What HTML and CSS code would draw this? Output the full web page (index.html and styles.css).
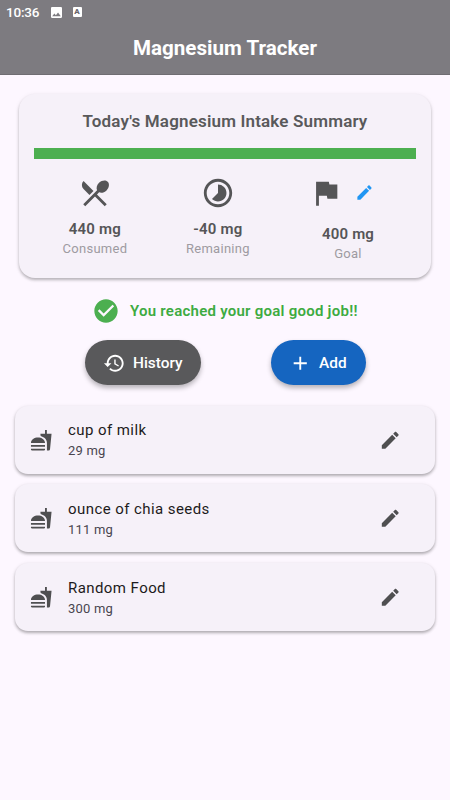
FILE: index.html
```html
<!DOCTYPE html>
<html lang="en">
<head>
<meta charset="utf-8">
<title>Magnesium Tracker</title>
<link rel="stylesheet" href="styles.css">
</head>
<body>
<svg class="defs" aria-hidden="true">
  <symbol id="edit" viewBox="0 0 24 24"><path d="M3 17.25V21h3.75L17.81 9.94l-3.75-3.75L3 17.25zM20.71 7.04c.39-.39.39-1.02 0-1.41l-2.34-2.34c-.39-.39-1.02-.39-1.41 0l-1.83 1.83 3.75 3.75 1.83-1.83z"/></symbol>
  <symbol id="food" viewBox="0 0 24 24"><path d="M18.06 22.99h1.66c.84 0 1.53-.64 1.63-1.46L23 5.05h-5V1h-1.97v4.05h-4.97l.3 2.34c1.71.47 3.31 1.32 4.27 2.26 1.44 1.42 2.43 2.89 2.43 5.29v8.05zM1 21.99V21h15.03v.99c0 .55-.45 1-1.01 1H2.01c-.56 0-1.01-.45-1.01-1zm15.03-7c0-8-15.03-8-15.03 0h15.03zM1.02 17h15v2h-15z"/></symbol>
</svg>
<header class="top">
  <div class="status">
    <span class="time">10:36</span>
    <svg class="status-image" viewBox="0 0 18 18"><path d="M18 16V2c0-1.100-.9-2-2-2H2C.9 0 0 .9 0 2v14c0 1.100.9 2 2 2h14c1.100 0 2-.9 2-2zM5.500 10.500l2.500 3.010L11.500 9l4.500 6H2l3.500-4.500z"/></svg>
    <span class="status-a">A</span>
  </div>
  <h1 class="title">Magnesium Tracker</h1>
</header>
<main>
  <section class="summary">
    <h2 class="summary-title">Today's Magnesium Intake Summary</h2>
    <div class="progress"></div>
    <div class="stats">
      <div class="stat consumed">
        <svg class="stat-icon" viewBox="0 0 24 24"><path d="M8.1 13.34l2.83-2.83L3.91 3.5c-1.56 1.56-1.56 4.09 0 5.66l4.19 4.18zm6.78-1.81c1.53.71 3.68.21 5.27-1.38 1.91-1.91 2.28-4.65.81-6.12-1.46-1.46-4.2-1.1-6.12.81-1.59 1.59-2.09 3.74-1.38 5.27L3.7 19.87l1.41 1.41L12 14.41l6.88 6.88 1.41-1.41L13.41 13l1.47-1.47z"/></svg>
        <div class="value">440 mg</div>
        <div class="label">Consumed</div>
      </div>
      <div class="stat remaining">
        <svg class="stat-icon" viewBox="0 0 24 24"><path d="M16.24 7.76C15.07 6.59 13.54 6 12 6v6l-4.24 4.24c2.34 2.34 6.14 2.34 8.49 0 2.34-2.34 2.34-6.14-.01-8.48zM12 2C6.48 2 2 6.48 2 12s4.48 10 10 10 10-4.48 10-10S17.52 2 12 2zm0 18c-4.42 0-8-3.58-8-8s3.58-8 8-8 8 3.58 8 8-3.58 8-8 8z"/></svg>
        <div class="value">-40 mg</div>
        <div class="label">Remaining</div>
      </div>
      <div class="stat goal">
        <div class="goal-icons">
          <svg class="stat-icon" viewBox="0 0 24 24"><path d="M14.4 6L14 4H5v17h2v-7h5.600l.4 2h7V6z"/></svg>
          <svg class="goal-edit"><use href="#edit"/></svg>
        </div>
        <div class="value">400 mg</div>
        <div class="label">Goal</div>
      </div>
    </div>
  </section>
  <div class="message">
    <svg class="check" viewBox="0 0 24 24"><path d="M12 2C6.48 2 2 6.48 2 12s4.48 10 10 10 10-4.48 10-10S17.52 2 12 2zm-2 15l-5-5 1.410-1.410L10 14.170l7.590-7.590L19 8l-9 9z"/></svg>
    <span class="message-text">You reached your goal good job!!</span>
  </div>
  <div class="actions">
    <button class="btn history"><svg viewBox="0 0 24 24"><path d="M13 3c-4.970 0-9 4.030-9 9H1l3.890 3.890.07.14L9 12H6c0-3.870 3.130-7 7-7s7 3.130 7 7-3.130 7-7 7c-1.930 0-3.680-.79-4.940-2.060l-1.420 1.420C8.270 19.990 10.510 21 13 21c4.970 0 9-4.030 9-9s-4.030-9-9-9zm-1 5v5l4.280 2.540.72-1.210-3.500-2.080V8H12z"/></svg><span>History</span></button>
    <button class="btn add"><svg viewBox="0 0 24 24"><path d="M19 13h-6v6h-2v-6H5v-2h6V5h2v6h6v2z"/></svg><span>Add</span></button>
  </div>
  <ul class="foods">
    <li class="food">
      <svg class="food-icon"><use href="#food"/></svg>
      <div class="food-text"><div class="food-name">cup of milk</div><div class="food-amount">29 mg</div></div>
      <svg class="food-edit"><use href="#edit"/></svg>
    </li>
    <li class="food">
      <svg class="food-icon"><use href="#food"/></svg>
      <div class="food-text"><div class="food-name">ounce of chia seeds</div><div class="food-amount">111 mg</div></div>
      <svg class="food-edit"><use href="#edit"/></svg>
    </li>
    <li class="food">
      <svg class="food-icon"><use href="#food"/></svg>
      <div class="food-text"><div class="food-name">Random Food</div><div class="food-amount">300 mg</div></div>
      <svg class="food-edit"><use href="#edit"/></svg>
    </li>
  </ul>
</main>
</body>
</html>
```
FILE: styles.css
```css
* { box-sizing: border-box; }
body {
  margin: 0;
  height: 800px;
  overflow: hidden;
  background: #fdf7ff;
  font-family: Roboto, "Liberation Sans", sans-serif;
  color: #4f4f51;
}
svg { display: block; fill: currentColor; flex: none; }
.defs { display: none; }
h1, h2, ul { margin: 0; padding: 0; list-style: none; }

.top { height: 75px; background: #7d7b80; border-bottom: 1px solid #6f6d72; color: #fff; }
.status { display: flex; align-items: center; height: 24px; padding-left: 6px; }
.time { width: 45px; font-size: 13.500px; font-weight: 500; line-height: 24px; letter-spacing: -.2px; }
.status-image { width: 11px; height: 11px; }
.status-a {
  width: 9px; height: 10px; margin-left: 10.500px; border-radius: 1px;
  background: #fff; color: #69676c;
  font-size: 8px; font-weight: 900; line-height: 10px; text-align: center;
}
.title { padding-top: 12.400px; font-size: 20.600px; font-weight: 700; line-height: 24px; text-align: center; }

.summary {
  height: 184px; margin: 19px 19px 0; padding: 16px 15px 0;
  border-radius: 16px; background: #f6f1f9;
  box-shadow: 0 2px 3px rgba(0,0,0,.24), 0 1px 5px rgba(0,0,0,.08);
}
.summary-title { font-size: 17px; font-weight: 600; line-height: 22px; letter-spacing: .17px; text-align: center; color: #59595b; }
.progress { height: 11px; margin-top: 16.400px; background: #4caf50; }
.stats { display: flex; justify-content: space-between; padding: 16.600px 29px 0 28.500px; }
.stat { display: flex; flex-direction: column; align-items: center; color: #555557; }
.stat-icon { width: 34px; height: 34px; }
.value { margin-top: 9px; font-size: 15px; font-weight: 600; line-height: 20px; letter-spacing: .2px; }
.label { font-size: 13px; line-height: 19px; letter-spacing: .28px; color: #9e9ba1; }
.goal-icons { display: flex; align-items: center; width: 79px; height: 39.500px; padding-bottom: 5.500px; gap: 12px; }
.goal-edit { width: 19px; height: 19px; color: #2196f3; }
.goal { margin-right: -.5px; }

.message { display: flex; align-items: center; height: 28px; margin-top: 19px; padding-left: 92px; color: #4caf50; }
.check { width: 28px; height: 28px; }
.message-text { margin-left: 10px; font-size: 15px; font-weight: 600; letter-spacing: .25px; white-space: nowrap; color: #3dab42; }

.actions { display: flex; justify-content: space-between; margin: 15px 84.500px 0; }
.btn {
  display: flex; align-items: center; height: 45px; padding: 1px 0 0 18.500px;
  border: 0; border-radius: 23px; color: #fff;
  font: 500 15.400px Roboto, "Liberation Sans", sans-serif; letter-spacing: 0;
  box-shadow: 0 3px 5px rgba(0,0,0,.28);
}
.btn svg { width: 22.500px; height: 22.500px; margin-right: 7.500px; }
.history { width: 116.500px; background: #59595b; }
.add { width: 95px; background: #1565c0; }

.foods { display: flex; flex-direction: column; gap: 10.700px; margin: 20.500px 15px 0; }
.food {
  display: flex; align-items: center; height: 68px; padding: 1px 34px 0 15px;
  border-radius: 13px; background: #f6f1f9;
  box-shadow: 0 2px 3px rgba(0,0,0,.25), 0 1px 4px rgba(0,0,0,.1);
}
.food-icon { width: 22.500px; height: 22.500px; }
.food-text { flex: 1; margin-left: 15.500px; padding-top: .6px; }
.food-name { font-size: 15px; line-height: 22px; letter-spacing: .43px; color: #1d1b20; }
.food-amount { font-size: 13px; line-height: 20px; letter-spacing: .2px; color: #49454f; }
.food-edit { width: 22.500px; height: 22.500px; }
```
